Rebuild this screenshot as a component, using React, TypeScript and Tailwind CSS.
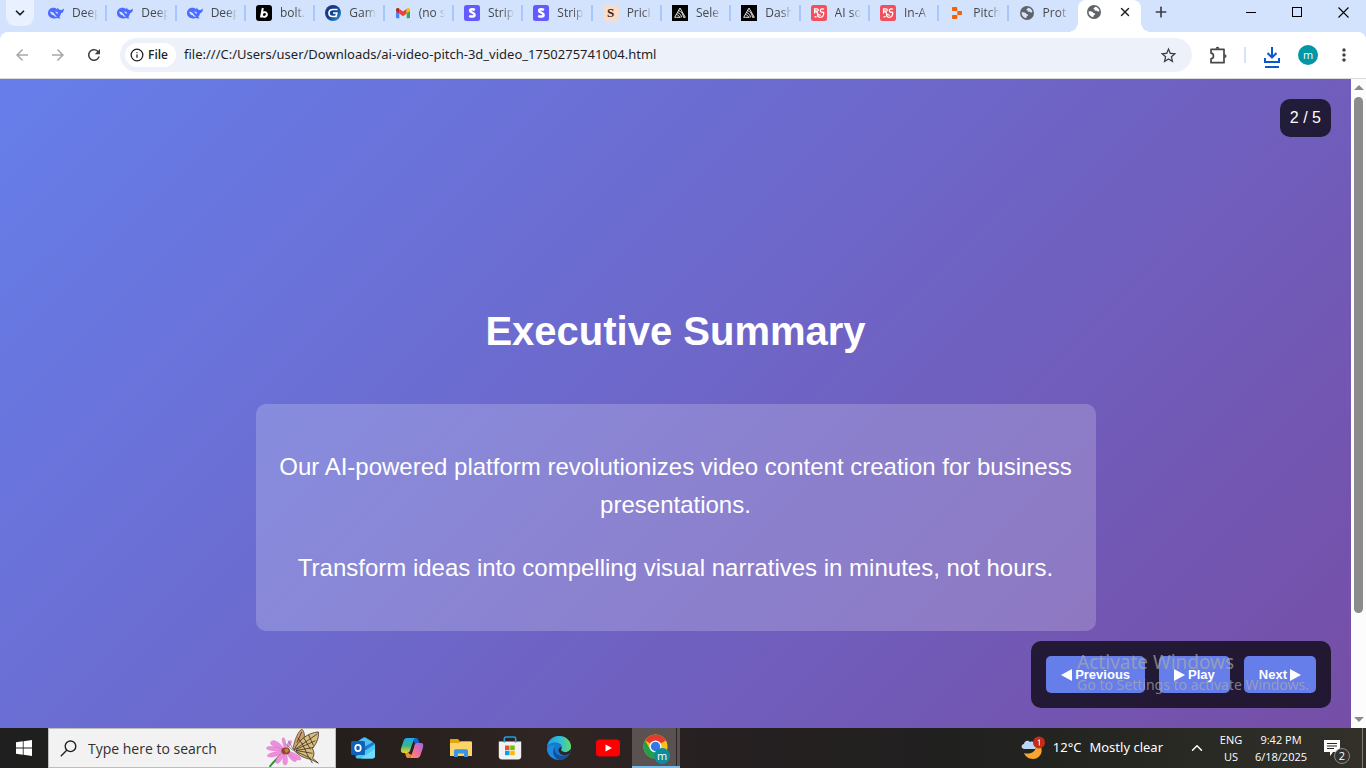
import type { ReactNode } from "react";
import { ChevronDown, ChevronUp, Info, Plus, X } from "lucide-react";
import {
  MdArrowBack,
  MdArrowForward,
  MdMoreVert,
  MdRefresh,
  MdStarOutline,
} from "react-icons/md";

const Whale = () => (
  <svg viewBox="0 0 16 16" className="size-4">
    <path
      fill="#4d6bfe"
      d="M0 8.300C0 5 2.300 2.800 5.300 2.800c1.500 0 2.600.5 3.700 1.400.3-.8.5-1.200.9-1.600.3 1.200.8 1.900 1.800 2.200 1.200.3 2.500-.1 4.300-1.400-.1 2.500-1 4.300-3 4.800-.3 1.700-.9 3.100-1.900 4.100.5.3 1.100.4 1.500.7-1.100.8-2.500.6-3.300.1C4.700 14.600 0 12.200 0 8.300z"
    />
    <path fill="#d3e3fd" d="M2 6.800c1.900-.5 3.300.5 4.400 2.100.8 1.200 1.500 2.100 2.600 2.800-1.300.2-2.500-.4-3.400-1.500-1.500.1-2.900-1.400-3.600-3.400z" />
    <path fill="#d3e3fd" d="M7.300 6.700c1.200-.4 2.700.5 2.700 2.100l-1.200-.3c-.7-.4-1.200-1-1.500-1.800z" />
  </svg>
);

const Bolt = () => (
  <svg viewBox="0 0 16 16" className="size-4">
    <rect width="16" height="16" rx="3" fill="#000" />
    <path d="M6.800 3 5 12.500" stroke="#fff" strokeWidth="2" fill="none" />
    <ellipse cx="8.400" cy="9.500" rx="2.500" ry="2.300" stroke="#fff" strokeWidth="1.900" fill="none" transform="rotate(-15 8.400 9.500)" />
  </svg>
);

const GameLogo = () => (
  <svg viewBox="0 0 16 16" className="size-4">
    <defs>
      <linearGradient id="game" x1="0" y1="0" x2="1" y2="1">
        <stop offset="0" stopColor="#1d2f80" />
        <stop offset=".5" stopColor="#12408f" />
        <stop offset="1" stopColor="#2aa0e0" />
      </linearGradient>
    </defs>
    <circle cx="8" cy="8" r="8" fill="url(#game)" />
    <path d="M12.500 4.500H8C5.500 4.500 4 5.800 4 8s1.500 3.500 3.500 3.500H11L11.800 8H8" stroke="#fff" strokeWidth="1.700" fill="none" />
  </svg>
);

const Gmail = () => (
  <svg viewBox="0 0 16 16" className="size-4">
    <path fill="#4285f4" d="M1 4v8.200c0 .6.500 1 1 1h2.300V6.500z" />
    <path fill="#34a853" d="M11.700 13.200H14c.6 0 1-.4 1-1V4l-3.300 2.500z" />
    <path fill="#ea4335" d="M4.300 8.500V3.700L8 6.500l3.700-2.800v4.800L8 11.300z" />
    <path fill="#c5221f" d="M1 4.500C1 3 2.700 2.500 3.700 3.200l.6.500v4.800L1 6z" />
    <path fill="#fbbc04" d="M15 4.500c0-1.500-1.700-2-2.700-1.300l-.6.500v4.800L15 6z" />
  </svg>
);

const Stripe = () => (
  <svg viewBox="0 0 16 16" className="size-4">
    <rect width="16" height="16" rx="2.500" fill="#635bff" />
    <path
      fill="none"
      stroke="#fff"
      strokeWidth="2.500"
      d="M10.900 4.900C9.500 4.200 6.100 3.800 6.100 5.800c0 2.100 4.500 1.600 4.500 4 0 2.300-3.300 2.100-5.400 1"
    />
  </svg>
);

const Pricing = () => (
  <span className="flex size-4 items-center justify-center rounded-[4px] bg-[#fbdcc8] font-['Liberation_Serif',serif] text-[13px] leading-4 font-bold text-[#222]">
    S
  </span>
);

const Sentry = () => (
  <svg viewBox="0 0 16 16" className="size-4">
    <rect width="16" height="16" fill="#000" />
    <g fill="none" stroke="#fff" strokeWidth=".9">
      <path d="M8 3 2.700 12.300h2L8.500 12.300M8 3l5.300 9.300h-1.800" />
      <path d="M6.600 5.500c2.900 1.300 4.600 3.700 4.900 6.800" />
      <path d="M5.500 7.500c2.400 1 3.800 2.600 4 4.800" />
      <path d="M4.400 9.400c1.800.6 2.900 1.500 3.100 2.900" />
    </g>
  </svg>
);

const RedBadge = () => (
  <svg viewBox="0 0 16 16" className="size-4">
    <rect width="16" height="16" rx="2.500" fill="#f2505d" />
    <g fill="none" stroke="#fff" strokeWidth="1.300">
      <path d="M3.600 8.500V3.800H6c1.700 0 1.700 2.300 0 2.300H4c2.300.3 2.800 2.200 2.900 3.900" />
      <path d="M13 4.300c-1.200-.8-3.700-.8-3.700 1.100 0 1.600 1.100 1.900 3.300 1.900.6 2.600-.9 5-3.500 5-2.200 0-3-1.500-2.200-2.300.9-.8 1.900.1 2.900.3" />
      <path d="M3.500 11.800h2" />
    </g>
  </svg>
);

const Replit = () => (
  <svg viewBox="0 0 16 16" className="size-4">
    <path fill="#f26207" d="M3 3c0-.6.400-1 1-1h3.500c.5 0 .8.400.8.900v3H4c-.6 0-1-.4-1-1zM8.300 6H12c.6 0 1 .4 1 1v2c0 .6-.4 1-1 1H8.300zM3 11c0-.6.400-1 1-1h4.300v3c0 .6-.4 1-.8 1H4c-.6 0-1-.4-1-1z" />
  </svg>
);

const Globe = ({ land = "#d3e3fd" }: { land?: string }) => (
  <svg viewBox="0 0 16 16" className="size-4">
    <circle cx="8" cy="8" r="7" fill="#5f6368" />
    <path
      fill={land}
      d="M8.800 2.700c1.800.2 3.400 1.200 4.200 2.800l.4 1.500c-.8.900-1.600.5-2.200-.1-.5-.5-1.200.1-2-.2-.9-.4-.3-1.200-1.100-1.400-.7-.2-.8-.7-.4-1.100.5-.4 1.100-.7 1.100-1.500z"
    />
    <path
      fill={land}
      d="M2.600 7.200c1.300-.2 3.200.1 4.100.8.600.5.400 1.100 1.300 1.300 1 .2 1.500.6 1.100 1.300-.4.600-1.400.4-1.500 1.300-.1.800-.4 1.200-1.200 1.200-2.200-.7-4-2.800-3.800-5.900z"
    />
  </svg>
);

const tabs: { title: string; icon: ReactNode }[] = [
  { title: "Deep", icon: <Whale /> },
  { title: "Deep", icon: <Whale /> },
  { title: "Deep", icon: <Whale /> },
  { title: "bolt.", icon: <Bolt /> },
  { title: "Gam", icon: <GameLogo /> },
  { title: "(no s", icon: <Gmail /> },
  { title: "Strip", icon: <Stripe /> },
  { title: "Strip", icon: <Stripe /> },
  { title: "Prici", icon: <Pricing /> },
  { title: "Sele", icon: <Sentry /> },
  { title: "Dash", icon: <Sentry /> },
  { title: "AI so", icon: <RedBadge /> },
  { title: "In-A", icon: <RedBadge /> },
  { title: "Pitch", icon: <Replit /> },
  { title: "Prot", icon: <Globe /> },
];

function TabStrip() {
  return (
    <div className="flex h-8 shrink-0 bg-[#d3e3fd]">
      <div className="w-[38px] shrink-0 pl-1.5">
        <button aria-label="Search tabs" className="flex h-[26px] w-7 items-center justify-center rounded-b-[9px] bg-[#e9f0fe]">
          <ChevronDown className="size-3.5 text-[#1f1f1f]" strokeWidth={3} />
        </button>
      </div>
      <div className="flex max-w-[1040px] min-w-0 flex-1">
        {tabs.map((tab, i) => (
          <button key={i} className="flex h-[25px] min-w-0 flex-1 items-center pl-2.5 text-left">
            <span className="shrink-0">{tab.icon}</span>
            <span className="ml-2 min-w-0 flex-1 overflow-hidden text-xs whitespace-nowrap text-[#474747] [mask-image:linear-gradient(to_right,black_60%,transparent)]">
              {tab.title}
            </span>
            <span className={i < tabs.length - 1 ? "ml-[7px] h-4 w-0.5 shrink-0 bg-[#a8c7fa]" : "ml-[7px] w-0.5 shrink-0"} />
          </button>
        ))}
      </div>
      <div className="relative flex h-8 w-[63px] shrink-0 items-start justify-between rounded-t-lg bg-white pt-1 pr-2 pl-2">
        <span className="absolute bottom-0 -left-2.5 size-2.5 bg-[radial-gradient(circle_at_0_0,transparent_10px,white_10px)]" />
        <span className="absolute -right-2.5 bottom-0 size-2.5 bg-[radial-gradient(circle_at_100%_0,transparent_10px,white_10px)]" />
        <Globe land="#ffffff" />
        <button aria-label="Close tab" className="flex size-4 items-center justify-center">
          <X className="size-3.5 text-[#1f1f1f]" strokeWidth={2.500} />
        </button>
      </div>
      <button aria-label="New tab" className="flex h-6 w-10 shrink-0 items-center justify-center">
        <Plus className="size-4 text-[#3c3f43]" strokeWidth={2.500} />
      </button>
      <div className="ml-auto flex h-6 shrink-0">
        <button aria-label="Minimize" className="flex w-[46px] items-center justify-center">
          <span className="h-px w-2.5 bg-black" />
        </button>
        <button aria-label="Maximize" className="flex w-[46px] items-center justify-center">
          <span className="size-2.5 border border-black" />
        </button>
        <button aria-label="Close" className="flex w-[46px] items-center justify-center">
          <svg viewBox="0 0 11 11" className="size-[11px]" stroke="#000" strokeWidth="1.100">
            <path d="M.5.5l10 10M10.500.5l-10 10" />
          </svg>
        </button>
      </div>
    </div>
  );
}

function Toolbar() {
  return (
    <div className="shrink-0 bg-[#d3e3fd]">
      <div className="flex h-[47px] items-center rounded-t-lg border-b border-[#d9dadd] bg-white pl-1">
        <button aria-label="Back" className="flex size-9 items-center justify-center text-[#a6a8ab]">
          <MdArrowBack className="size-[18px]" />
        </button>
        <button aria-label="Forward" className="flex size-9 items-center justify-center text-[#a6a8ab]">
          <MdArrowForward className="size-[18px]" />
        </button>
        <button aria-label="Reload" className="flex size-9 items-center justify-center text-[#3c3f43]">
          <MdRefresh className="size-[18px]" />
        </button>
        <div className="ml-2 flex h-[34px] min-w-0 flex-1 items-center rounded-full bg-[#ecf1fa] pr-3.5 pl-[5px]">
          <button className="flex h-6 w-[51px] shrink-0 items-center gap-1 rounded-full bg-white pl-[5px] text-xs font-semibold text-[#1f1f1f]">
            <Info className="size-3.5" strokeWidth={2.200} />
            File
          </button>
          <input
            aria-label="Address"
            readOnly
            defaultValue="file:///C:/Users/user/Downloads/ai-video-pitch-3d_video_1750275741004.html"
            className="ml-2 min-w-0 flex-1 bg-transparent font-['Noto_Sans',sans-serif] text-[13px] text-[#1f1f1f] outline-none"
          />
          <button aria-label="Bookmark">
            <MdStarOutline className="size-[19px] text-[#3c3f43]" />
          </button>
        </div>
        <button aria-label="Extensions" className="ml-2 flex size-9 items-center justify-center">
          <svg viewBox="0 0 18 18" className="size-[18px]" fill="none" stroke="#474747" strokeWidth="1.700" strokeLinejoin="round">
            <path d="M2 3.300h13v13.400H2v-3.900c3.300-.4 3.300-5.200 0-5.600z" />
            <path d="M6.600 2.700a1.900 1.900 0 0 1 3.800 0zM15.600 8.200a1.900 1.900 0 0 1 0 3.800z" fill="#474747" stroke="none" />
          </svg>
        </button>
        <span className="mx-2 h-4 w-0.5 bg-[#d3e3fd]" />
        <button aria-label="Downloads" className="flex size-9 items-center justify-center pt-1">
          <svg viewBox="0 0 18 22" className="h-[22px] w-[18px]" fill="none" stroke="#0b57d0" strokeWidth="2">
            <path d="M9 1v10M4.500 7 9 11.500 13.500 7M2 12v4h14v-4M2 21h14" />
          </svg>
        </button>
        <button aria-label="Profile" className="flex size-9 items-center justify-center">
          <span className="flex size-5 items-center justify-center rounded-full bg-[#0097a7] pb-px text-[11px] leading-5 text-white">m</span>
        </button>
        <button aria-label="Menu" className="mr-1 flex size-9 items-center justify-center">
          <MdMoreVert className="size-5 text-[#3c3f43]" />
        </button>
      </div>
    </div>
  );
}

const slideButton = "flex h-[37px] items-center gap-[3px] rounded-[5px] bg-[#667eea] px-[15px] text-[13px] font-bold text-white";

const Triangle = ({ left = false }: { left?: boolean }) => (
  <svg viewBox="0 0 11 12" className="h-3 w-[11px]" fill="#fff">
    <path d={left ? "M11 0v12L0 6z" : "M0 0v12l11-6z"} />
  </svg>
);

function Slide() {
  return (
    <main className="relative min-w-0 flex-1 overflow-hidden font-['Liberation_Sans',Arial,sans-serif] text-white">
      <section className="flex h-full min-h-[773px] flex-col items-center justify-center bg-[linear-gradient(135deg,#667eea_0%,#764ba2_100%)] px-5 text-center">
        <h1 className="text-[40px] leading-[62px] font-bold">Executive Summary</h1>
        <div className="mt-[42px] flex w-full max-w-[840px] flex-col gap-[25px] rounded-[10px] bg-white/20 px-5 py-11 text-2xl leading-[38px]">
          <p>Our AI-powered platform revolutionizes video content creation for business presentations.</p>
          <p>Transform ideas into compelling visual narratives in minutes, not hours.</p>
        </div>
      </section>
      <div className="absolute top-5 right-5 rounded-[10px] bg-black/70 px-2.5 py-[7px] text-base">2 / 5</div>
      <div className="absolute right-5 bottom-5 flex gap-3.5 rounded-[10px] bg-black/70 p-[15px]">
        <button className={slideButton}>
          <Triangle left />
          Previous
        </button>
        <button className={slideButton}>
          <Triangle />
          Play
        </button>
        <button className={slideButton}>
          Next
          <Triangle />
        </button>
      </div>
      <div className="pointer-events-none absolute right-[42px] bottom-8 text-left font-['Noto_Sans',sans-serif] whitespace-nowrap text-[#aaaaaa]/70">
        <div className="text-[19px] leading-6">Activate Windows</div>
        <div className="text-sm leading-[22px]">Go to Settings to activate Windows.</div>
      </div>
    </main>
  );
}

function Scrollbar() {
  return (
    <div className="flex w-[15px] shrink-0 flex-col items-center justify-between bg-[#fcfcfc] py-1.5">
      <svg viewBox="0 0 10 5" className="h-[5px] w-2.5" fill="#8b8b8b">
        <path d="M5 0l5 5H0z" />
      </svg>
      <div className="mt-[7px] mb-auto h-[81%] w-[9px] rounded-full bg-[#8b8b8b]" />
      <svg viewBox="0 0 10 5" className="h-[5px] w-2.5" fill="#8b8b8b">
        <path d="M5 5l5-5H0z" />
      </svg>
    </div>
  );
}

const Butterfly = () => (
  <svg viewBox="0 0 56 39" className="h-[38px] w-14">
    <path d="M17 24C13 30 8 33 4 39" stroke="#3f8a3c" strokeWidth="2" fill="none" />
    <g fill="#ee8fdc" stroke="#d768c4" strokeWidth=".5">
      <path d="M20 22C12 10 6 11 5 14s8 5 15 8z" />
      <path d="M20 22C6 16 0 18 1 20s10 3 19 2z" />
      <path d="M20 22C8 23 0 26 2 28s12 0 18-6z" />
      <path d="M20 22C12 27 9 33 11 35s7-5 9-13z" />
      <path d="M20 22c-3 8-3 15 0 15s3-8 0-15z" />
      <path d="M20 22c3 6 8 13 11 11s-4-8-11-11z" />
      <path d="M20 22c7 1 17 6 16 9s-10-3-16-9z" />
      <path d="M20 22C17 14 16 9 18 9s3 6 2 13z" />
      <path d="M20 22c2-7 4-11 6-10s-2 6-6 10z" />
    </g>
    <ellipse cx="20.500" cy="22.500" rx="4.500" ry="3.500" fill="#8d4a2b" />
    <path d="M19 21l3-1 2 2-3 3z" fill="#c98345" />
    <path d="M28 20C30 10 33 3 37 0c4 4 3 10 1 17L29 22z" fill="#cfa06e" stroke="#4a3a2a" strokeWidth=".7" />
    <path d="M29 22C34 11 43 4 54 3c1 7-3 13-6 17 2 4 2 7 0 10l6 5-8-4c-6-1-11-3-17-9z" fill="#d9bd7c" stroke="#332b22" strokeWidth=".8" />
    <g stroke="#332b22" strokeWidth=".8" fill="none">
      <path d="M30 21 53 5M31 21 51 12M31 22 49 19M31 22 48 25M31 23 46 30M33 9l4 6M32 14l5-11M39 9l7 12M44 6l5 11M37 14l7 15" />
      <path d="M45 30l3 5" />
    </g>
    <path d="M23 12l6 10M20 15l8 7" stroke="#5a646e" strokeWidth=".7" />
  </svg>
);

const Outlook = () => (
  <svg viewBox="0 0 24 24" className="size-6">
    <path d="M3 8 12.500 1 24 7.500V12L12 18z" fill="#1a7bd0" />
    <path d="M8 4.500 14 1.200 22 6 13 11z" fill="#4fc1f0" />
    <path d="M24 8v12c0 1.500-1 2.500-2.500 2.500h-15c-1 0-2-.8-2-2z" fill="#4cc8f4" />
    <path d="M24 8 12 16 4.500 20.500V12L14 14z" fill="#1490df" />
    <path d="M10 22.500 24 13v7c0 1.500-1 2.500-2.500 2.500z" fill="#72ddfa" />
    <rect y="5" width="14" height="14" rx="1.500" fill="#0f62b8" />
    <ellipse cx="7" cy="12" rx="2.700" ry="3.200" fill="none" stroke="#fff" strokeWidth="1.800" />
  </svg>
);

const Copilot = () => (
  <svg viewBox="0 0 24 24" className="size-6">
    <defs>
      <linearGradient id="cpa" x1="0" y1="0" x2="0" y2="1">
        <stop offset="0" stopColor="#20a7f2" />
        <stop offset=".5" stopColor="#34b88b" />
        <stop offset="1" stopColor="#f3d32f" />
      </linearGradient>
      <linearGradient id="cpb" x1="1" y1="0" x2="0" y2="1">
        <stop offset="0" stopColor="#9a69ef" />
        <stop offset=".5" stopColor="#ef6aa0" />
        <stop offset="1" stopColor="#ff9a45" />
      </linearGradient>
    </defs>
    <path d="M13 2h3c2 0 2 1 3 4l1 2h-5z" fill="#1764cf" />
    <path d="M7 2h9c-1.600 0-2.200 1.300-2.700 3l-3 9c-.7 2-1.600 3-3.600 3H3.500C.5 17 .5 14 1.500 11l2-6C4.200 3 5 2 7 2z" fill="url(#cpa)" />
    <path d="M17.500 7H21c3 0 2.500 3 1.500 6l-2 6c-.7 2-1.500 3-3.500 3H8.500c1.600 0 2.200-1.300 2.700-3l3-9c.7-2 1.300-3 3.300-3z" fill="url(#cpb)" />
    <path d="M5 17h4.500l1.700 2c-.5 2-1.200 3-2.700 3C6 22 6 20 5 17z" fill="#f48b3b" />
    <path d="M11.700 10.500 9.900 16c-.4 1-.8 1.500-1.200 2l3 .3 2.700-8z" fill="#2c2523" />
  </svg>
);

const Folder = () => (
  <svg viewBox="0 0 24 24" className="size-6">
    <path d="M1 4c0-.6.400-1 1-1h7l2 2.500h11v4H1z" fill="#e5a50e" />
    <path d="M1 7h9l2-1.500h10c.6 0 1 .4 1 1V20H1z" fill="#fdd469" />
    <path d="M5 21v-6c0-1 .7-1.700 1.700-1.700h10.600c1 0 1.700.7 1.700 1.700v6h-4v-3.500H9V21z" fill="#3d95dd" />
  </svg>
);

const Store = () => (
  <svg viewBox="0 0 24 24" className="size-6">
    <path d="M.8 5.500h22.400v15c0 1.900-1.300 3-3 3H3.800c-1.700 0-3-1.100-3-3z" fill="#f2f2f2" />
    <path d="M6.300 6.500V2.700c0-1 .7-1.700 1.700-1.700h8c1 0 1.700.7 1.700 1.700v3.800" fill="none" stroke="#1f9ee0" strokeWidth="1.600" />
    <path d="M7 9.500h4.500V14H7z" fill="#f25022" />
    <path d="M12.200 9.500h4.500V14h-4.500z" fill="#7fba00" />
    <path d="M7 14.700h4.500v4.500H7z" fill="#00a4ef" />
    <path d="M12.200 14.700h4.500v4.500h-4.500z" fill="#ffb900" />
  </svg>
);

const Edge = () => (
  <svg viewBox="0 0 24 24" className="size-6">
    <defs>
      <linearGradient id="eda" x1="0" y1=".3" x2="1" y2=".3">
        <stop offset="0" stopColor="#1f9de5" />
        <stop offset=".6" stopColor="#35c1d0" />
        <stop offset="1" stopColor="#66dc58" />
      </linearGradient>
    </defs>
    <circle cx="12" cy="12" r="12" fill="#1678cc" />
    <path d="M.1 11C.8 4.500 6 0 12 0c7 0 12 5 12 10.500 0 3.700-2.800 5.500-5.700 5.500-3.300 0-4.300-1.200-4.300-2 0-.7 1-1.200 1-3 0-2.300-2.700-4.500-6.500-4.500C4.500 6.500 1 8.500.1 11z" fill="url(#eda)" />
    <path d="M9 9.500c-4.500 2.500-4 11 3 14-7-.3-11-4-12-10 1-4 5-5 9-4z" fill="#1b8bdf" />
    <path d="M9.500 9.700C6 12 7.500 19.500 15 19.800c3 .1 5-.8 7-1.800-2 3.500-5.500 6-10 6-7-3-7.500-11-2.500-14.300z" fill="#124f9f" />
    <path d="M14.500 12.500c-.8 1-.5 2.200 1 3 2.500 1.400 6 .7 8-2.500.4 2 0 3.500-1.500 5-3.500 2-8 1.500-10-2-1-1.800-.3-3.500 1-4.500.8-.5 1.800-.2 1.500 1z" fill="#2c2523" />
  </svg>
);

const YouTube = () => (
  <svg viewBox="0 0 24 24" className="size-6">
    <rect y="3.500" width="24" height="17" rx="3.500" fill="#f00" />
    <path d="M9.500 8.500v7l6.500-3.500z" fill="#fff" />
  </svg>
);

const Chrome = () => (
  <svg viewBox="0 0 26 26" className="size-[26px]">
    <circle cx="12.500" cy="12.500" r="12" fill="#fbc116" />
    <path d="M12.500 12.500 2.100 6.500A12 12 0 0 1 22.900 6.500z" fill="#e33b2e" />
    <path d="M2.100 6.500A12 12 0 0 0 12.500 24.500L17.700 15.500 7.300 15.500z" fill="#229f4b" />
    <circle cx="12.500" cy="12.500" r="6" fill="#fff" />
    <circle cx="12.500" cy="12.500" r="4.700" fill="#3478e5" />
  </svg>
);

const apps: { name: string; icon: ReactNode }[] = [
  { name: "Outlook", icon: <Outlook /> },
  { name: "Copilot", icon: <Copilot /> },
  { name: "File Explorer", icon: <Folder /> },
  { name: "Microsoft Store", icon: <Store /> },
  { name: "Edge", icon: <Edge /> },
  { name: "YouTube", icon: <YouTube /> },
];

function Taskbar() {
  return (
    <footer className="flex h-10 shrink-0 bg-[linear-gradient(90deg,#1f1f1f_0%,#241e1b_24%,#2f2523_40%,#251f20_55%,#20201f_70%,#272822_85%,#33302a_100%)] text-white">
      <button aria-label="Start" className="flex w-12 shrink-0 items-center justify-center">
        <svg viewBox="0 0 16 16" className="size-4" fill="#fff">
          <path d="M0 2.200 6.800 1.300v6.300H0zM7.600 1.200 16 0v7.600H7.600zM0 8.400h6.800v6.300L0 13.800zM7.600 8.400H16V16l-8.400-1.200z" />
        </svg>
      </button>
      <label className="flex w-[288px] shrink-0 items-center border border-[#bdbdbd] bg-[#f2f2f2] pr-3.5 pl-[11px]">
        <svg viewBox="0 0 17 17" className="size-[17px] shrink-0" fill="none" stroke="#222" strokeWidth="1.400">
          <circle cx="10.500" cy="6.300" r="5.300" />
          <path d="M6.700 10.200.8 16.200" />
        </svg>
        <input aria-label="Search" placeholder="Type here to search" className="ml-[11px] min-w-0 flex-1 bg-transparent pt-0.5 text-sm outline-none placeholder:text-[#303030]" />
        <Butterfly />
      </label>
      <nav className="ml-0.5 flex">
        {apps.map((app) => (
          <button key={app.name} aria-label={app.name} className="flex w-[49px] items-center justify-center">
            {app.icon}
          </button>
        ))}
        <button aria-label="Chrome" className="relative flex w-12 items-center justify-center border-b-2 border-[#76b9ed] bg-[#5a5251]">
          <Chrome />
          <span className="absolute right-2.5 bottom-0.5 flex size-4 items-center justify-center rounded-full bg-[#0c8d9b] text-[11px] leading-4">m</span>
          <span className="absolute top-0 right-[3px] h-full w-px bg-[#2b2625]" />
        </button>
      </nav>
      <div className="ml-auto flex shrink-0 items-center">
        <button className="flex items-center font-['Noto_Sans',sans-serif] text-[13px]">
          <svg viewBox="0 0 24 24" className="size-6">
            <path d="M20 11c2.500 6-2 12-8 12-4.500 0-8-3-9-6 6 2 12-1 12.500-7.500z" fill="#f7a62b" />
            <path d="M3.500 13C0 13-.5 8.500 3 8c0-3 4-4.500 6-2 3-1.500 5.500 1 5 3 2 1 1.500 4-1 4z" fill="#b9d7f7" />
            <circle cx="18" cy="6.500" r="6" fill="#c42b1c" />
            <path d="M16.800 4.800 18.300 3.800v5.700" stroke="#fff" fill="none" />
          </svg>
          <span className="ml-2">12°C</span>
          <span className="ml-2">Mostly clear</span>
        </button>
        <button aria-label="Show hidden icons" className="flex w-14 items-center justify-center pl-3">
          <ChevronUp className="size-[18px]" strokeWidth={2} />
        </button>
        <div className="w-6 text-center text-[11px] leading-[17px]">
          <div>ENG</div>
          <div>US</div>
        </div>
        <div className="w-[76px] text-center text-[11px] leading-[17px]">
          <div>9:42 PM</div>
          <div>6/18/2025</div>
        </div>
        <button aria-label="Notifications" className="relative mr-3 flex h-10 w-[31px] items-center pl-1">
          <svg viewBox="0 0 18 18" className="size-[18px]">
            <path d="M1 1h16v12h-7l-3 4v-4H1z" fill="#fff" />
            <path d="M4 4.500h10M4 7h10M4 9.500h7" stroke="#272822" />
          </svg>
          <span className="absolute right-0 bottom-1 flex size-4 items-center justify-center rounded-full border border-[#8b8b88] bg-[#33332f] text-[11px] leading-3">2</span>
        </button>
        <span className="mr-[3px] h-10 w-px bg-[#7d7b76]" />
      </div>
    </footer>
  );
}

export default function App() {
  return (
    <div className="flex h-screen flex-col overflow-hidden font-['Open_Sans','Noto_Sans',sans-serif]">
      <TabStrip />
      <Toolbar />
      <div className="flex min-h-0 flex-1">
        <Slide />
        <Scrollbar />
      </div>
      <Taskbar />
    </div>
  );
}
